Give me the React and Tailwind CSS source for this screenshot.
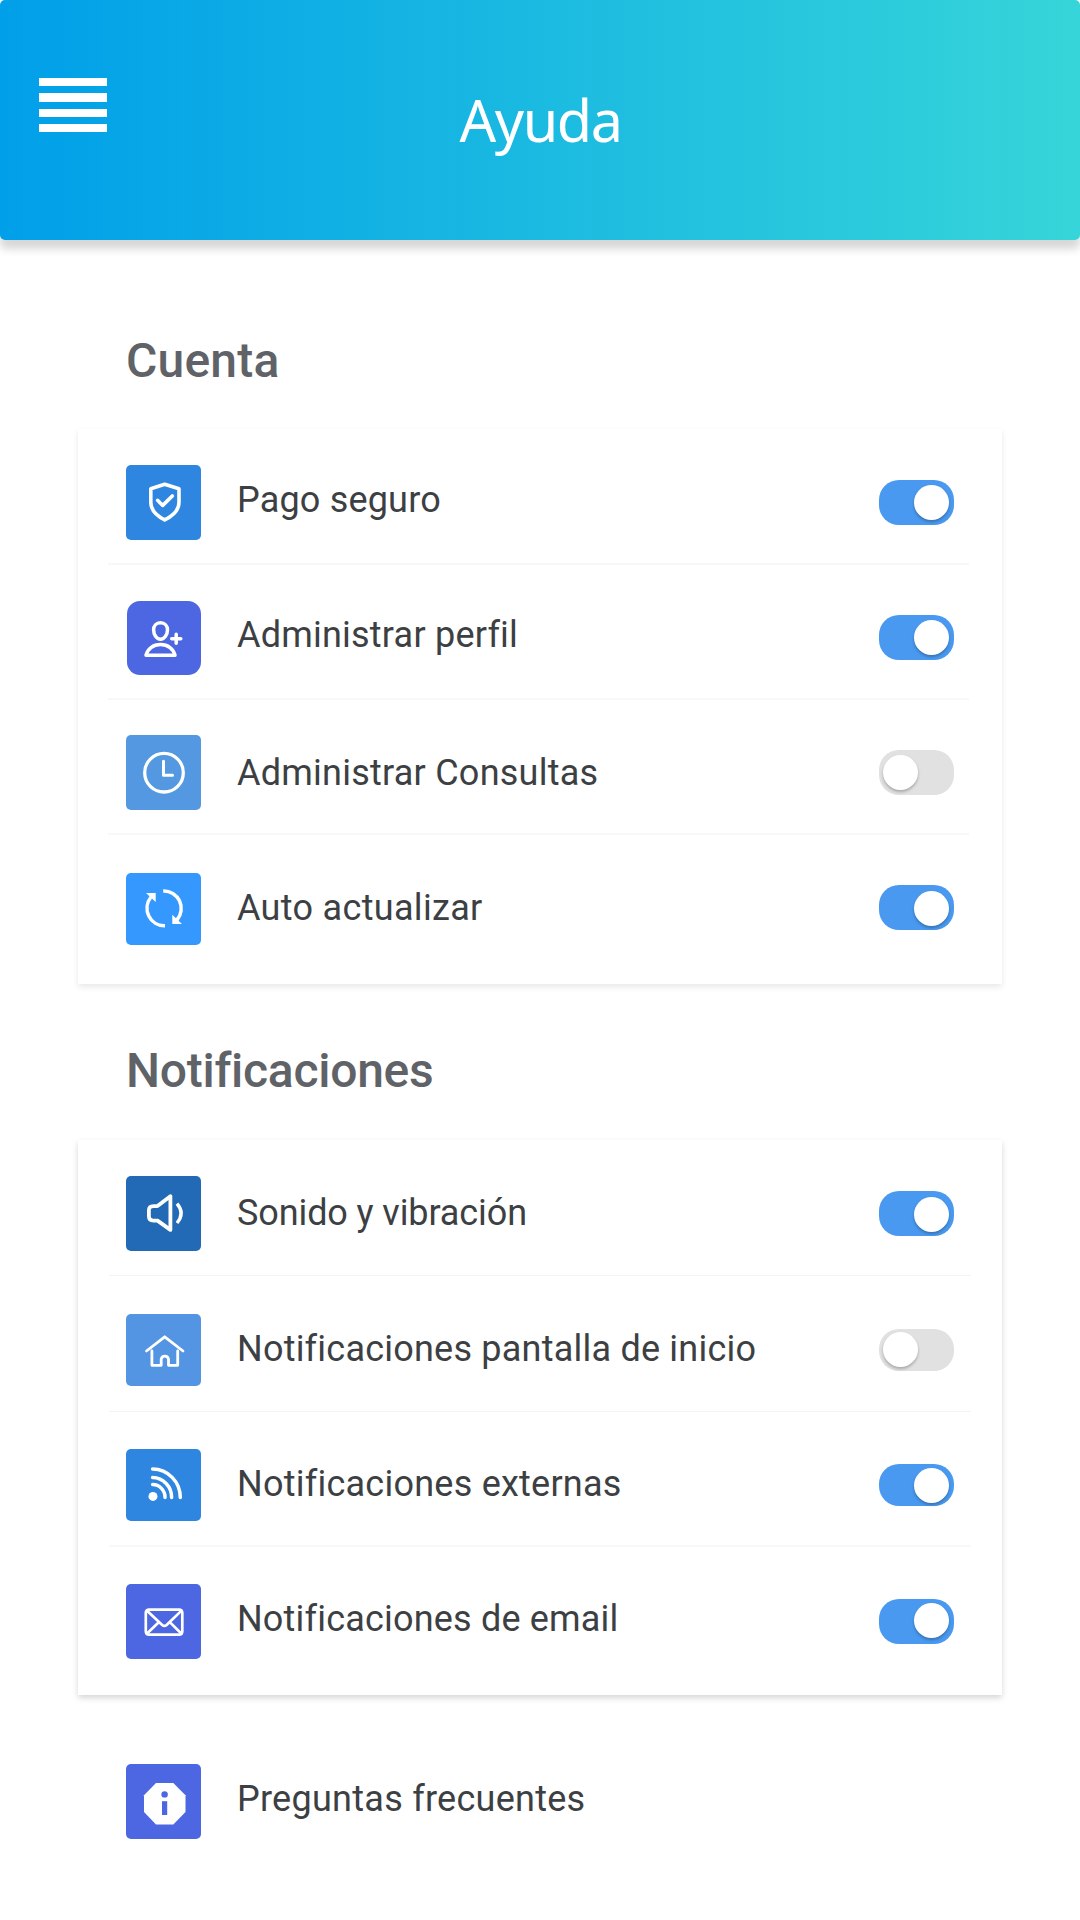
const stroke = { fill: "none", stroke: "white", strokeLinecap: "round", strokeLinejoin: "round" };

const icons = {
  shield: (
    <g {...stroke} strokeWidth="3.6">
      <path d="M38.7 19.2 53 23.8V37.5C53 45.5 46.5 51 38.7 54.9 31 51 24.8 45.5 24.8 37.5V23.8Z" />
      <path d="M31.6 35.3 36.7 40.4 46.3 31" />
    </g>
  ),
  user: (
    <g {...stroke} strokeWidth="3.5">
      <path d="M33.5 21.8C37.8 21.8 40.5 25 40.5 28.8 40.5 33.5 37.5 38.2 33.5 38.2 29.5 38.2 26.6 33.5 26.6 28.8 26.6 25 29.2 21.8 33.5 21.8Z" />
      <path d="M19 54.2C20.5 48 26 43.6 33.5 43.6S46.5 48 48 54.2Z" />
      <path d="M44.7 37.7H53.8M49.2 33.2V42.2" />
    </g>
  ),
  clock: (
    <g {...stroke} strokeWidth="3.3">
      <circle cx="38" cy="37.7" r="19.3" />
      <path d="M37.5 26.3V40.2H46.5" strokeWidth="3" />
    </g>
  ),
  sync: (
    <g>
      <path d="M37.2 17.900A17.300 17.600 0 0 1 51 47M39 52.800A17.300 17.600 0 0 1 25 24" fill="none" stroke="white" strokeWidth="3.5" />
      <path d="M46.3 41.7V51H56ZM20 20H29.7V28.900Z" fill="white" />
    </g>
  ),
  sound: (
    <g {...stroke} strokeWidth="3.8">
      <path d="M44.4 20.2V53.9L31.5 44.6H27.5Q22.9 44.6 22.9 40.3V34.3Q22.9 30.1 27.5 30.1H31.5Z" />
      <path d="M51 27.7Q59.3 37.3 51 47" strokeLinecap="butt" strokeWidth="3.4" />
    </g>
  ),
  home: (
    <g {...stroke} strokeWidth="2.8">
      <path d="M20.5 37 38.7 22.8 57 37" />
      <path d="M25.9 37V51.3H35.2V45.200A3.700 3.700 0 0 1 42.5 45.2V51.3H51.7V37" />
    </g>
  ),
  rss: (
    <g {...stroke} strokeWidth="3.500">
      <circle cx="27" cy="47.4" r="4.5" fill="white" stroke="none" />
      <path d="M26.600 20A27.800 28.500 0 0 1 54.300 48.400M26.600 28.600A19.200 19.600 0 0 1 45.600 48.400M26.600 35.600A12.400 12.600 0 0 1 39 48.400" />
    </g>
  ),
  mail: (
    <g {...stroke} strokeWidth="2.7">
      <rect x="19.8" y="25.6" width="36.5" height="25" rx="3" />
      <path d="M20.8 26.6 36.2 40.9Q38.4 43 40.6 40.9L55.5 26.6M32.5 38.6 20.8 49.8M44.3 38.6 55.5 49.8" />
    </g>
  ),
  info: (
    <g fill="white">
      <path d="M30 19H47.300L59.500 31.200V48L47.300 60.400H30L18 48V31.200Z" />
      <circle cx="38.600" cy="30.400" r="3.200" fill="#4d66e1" />
      <rect x="36" y="37.200" width="5.200" height="13.800" fill="#4d66e1" />
    </g>
  ),
};

function Tile({ icon, className }) {
  return (
    <div className={`shrink-0 overflow-hidden ${className}`}>
      <svg className="block" width="75" height="75" viewBox="0 0 75 75">
        {icons[icon]}
      </svg>
    </div>
  );
}

function Toggle({ on, className }) {
  return (
    <div
      role="switch"
      aria-checked={on}
      className={`ml-auto flex w-[75px] shrink-0 rounded-[20px] ${on ? "justify-end bg-[#4999f0] pr-[5px]" : "bg-[#e1e1e1] pl-1"} ${className}`}
    >
      <span className="size-[35px] rounded-full bg-white shadow-[0_2px_3px_rgba(0,0,0,0.25)]" />
    </div>
  );
}

function Row({ icon, label, on, row, tile, text, toggle }) {
  return (
    <li className={`flex items-start px-12 ${row}`}>
      <Tile icon={icon} className={tile} />
      <span className={`ml-9 text-[36px] leading-[48px] whitespace-nowrap text-[#3c4043] ${text}`}>{label}</span>
      <Toggle on={on} className={toggle} />
    </li>
  );
}

function Divider({ className }) {
  return <li aria-hidden="true" className={className} />;
}

const account = [
  { icon: "shield", label: "Pago seguro", on: true, row: "h-[134px]", tile: "mt-9 size-[75px] rounded-[5px] bg-[#2e86e0]", text: "mt-[47px] tracking-[0.18px]", toggle: "mt-[51px] h-[45px] pt-[5px]" },
  { icon: "user", label: "Administrar perfil", on: true, row: "h-[133px]", tile: "mt-[35.5px] ml-[1.3px] size-[74px] rounded-[13px] bg-[#4d66e1]", text: "mt-[46px] -indent-[0.3px] tracking-[0.22px]", toggle: "mt-[50px] h-[45px] pt-[5px]" },
  { icon: "clock", label: "Administrar Consultas", on: false, row: "h-[133px]", tile: "mt-[35px] size-[75px] rounded-[5px] bg-[#5398e0]", text: "mt-[49px] tracking-[0.24px]", toggle: "mt-[50px] h-[45px] pt-[5px]" },
  { icon: "sync", label: "Auto actualizar", on: true, row: "h-[149px]", tile: "mt-[38px] h-[72px] w-[75px] rounded-[5px] bg-[#3498ff]", text: "mt-[49px] tracking-[0.32px]", toggle: "mt-[50px] h-[45px] pt-1.5" },
];

const notifications = [
  { icon: "sound", label: "Sonido y vibración", on: true, row: "h-[135px]", tile: "mt-9 size-[75px] rounded-[5px] bg-[#226ab6]", text: "mt-[49px] tracking-[-0.1px]", toggle: "mt-[51px] h-[45px] pt-1.5" },
  { icon: "home", label: "Notificaciones pantalla de inicio", on: false, row: "h-[135px]", tile: "mt-[38px] h-[72px] w-[75px] rounded-[5px] bg-[#5395e3]", text: "mt-[49px] tracking-[0.22px]", toggle: "mt-[53px] h-[42px] pt-[3px]" },
  { icon: "rss", label: "Notificaciones externas", on: true, row: "h-[133px]", tile: "mt-[37px] h-[72px] w-[75px] rounded-[5px] bg-[#2e86e0]", text: "mt-12 tracking-[0.24px]", toggle: "mt-[52px] h-[42px] pt-1" },
  { icon: "mail", label: "Notificaciones de email", on: true, row: "h-[148px]", tile: "mt-[37px] size-[75px] rounded-[5px] bg-[#4d66e1]", text: "mt-12 tracking-[0.19px]", toggle: "mt-[52px] h-[45px] pt-1" },
];

export default function App() {
  return (
    <div className="flex h-[1920px] w-[1080px] flex-col overflow-hidden bg-white font-['Roboto',sans-serif]">
      <header className="grid h-60 shrink-0 grid-cols-[1fr_auto_1fr] items-start rounded-[5px] bg-[linear-gradient(to_right,#009fe9,#36d5d9)] px-[39px] shadow-[0_9px_9px_rgba(0,0,0,0.16)]">
        <button aria-label="Menú" className="mt-[78px] flex w-[67.5px] flex-col gap-[7px]">
          <span className="h-[8.3px] bg-white" />
          <span className="h-[8.3px] bg-white" />
          <span className="h-[8.3px] bg-white" />
          <span className="h-[8.3px] bg-white" />
        </button>
        <h1 className="mt-20 pl-px font-['Noto_Sans',sans-serif] text-[57.5px] leading-[80px] tracking-[-1.4px] text-white">Ayuda</h1>
      </header>

      <main className="flex flex-col px-[78px]">
        <h2 className="mt-[91px] ml-12 h-[60px] text-[48px] leading-[60px] font-medium tracking-[0.2px] text-[#5f6368]">Cuenta</h2>
        <ul className="mt-[38px] h-[555px] bg-white shadow-[0_3px_6px_rgba(0,0,0,0.09)]">
          <Row {...account[0]} />
          <Divider className="mr-[33px] ml-[30px] h-0.5 bg-[#f7f8f8]" />
          <Row {...account[1]} />
          <Divider className="mr-[33px] ml-[30px] h-0.5 bg-[#f7f8f8]" />
          <Row {...account[2]} />
          <Divider className="mr-[33px] ml-[30px] h-0.5 bg-[#f7f8f8]" />
          <Row {...account[3]} />
        </ul>

        <h2 className="mt-[57px] ml-12 h-[60px] text-[48px] leading-[60px] font-medium tracking-[-0.27px] text-[#5f6368]">Notificaciones</h2>
        <ul className="mt-[39px] h-[555px] bg-white shadow-[0_3px_6px_rgba(0,0,0,0.16)]">
          <Row {...notifications[0]} />
          <Divider className="mr-[31px] ml-[31px] h-px bg-[#f2f3f3]" />
          <Row {...notifications[1]} />
          <Divider className="mr-[31px] ml-[31px] h-px bg-[#f2f3f3]" />
          <Row {...notifications[2]} />
          <Divider className="mr-[31px] ml-[31px] h-0.5 bg-[#f7f8f8]" />
          <Row {...notifications[3]} />
        </ul>

        <div className="mt-[69px] flex items-start pl-12">
          <Tile icon="info" className="size-[75px] rounded-[5px] bg-[#4d66e1]" />
          <span className="mt-[11px] ml-9 text-[36px] leading-[48px] tracking-[0.27px] text-[#3c4043]">Preguntas frecuentes</span>
        </div>
      </main>
    </div>
  );
}
